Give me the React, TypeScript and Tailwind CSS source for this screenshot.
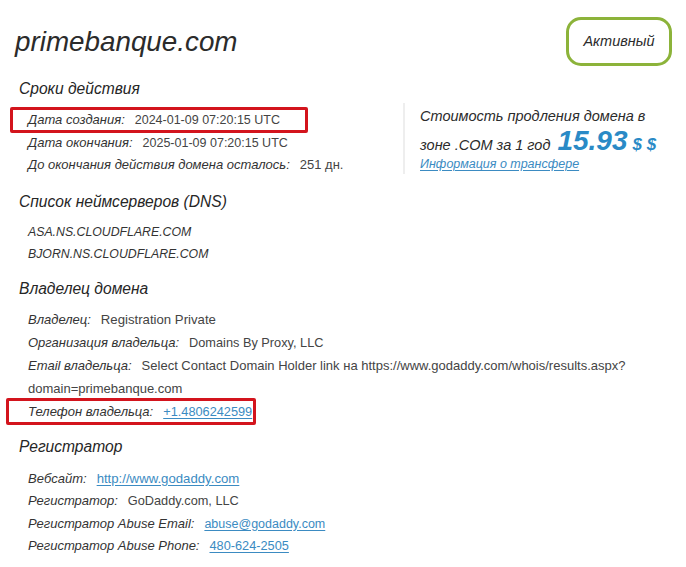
import React from "react";

const font = { fontFamily: '"Liberation Sans", Arial, sans-serif' };

function Row({ label, children, vs = "text-[12.75px]", h = "h-[22.5px] leading-[22.5px]" }: { label: string; children: React.ReactNode; vs?: string; h?: string }) {
  return (
    <div className={`flex items-baseline ${h} pl-[28px]`}>
      <span className="italic text-[13px] text-[#333] mr-[10px]">{label}</span>
      <span className={`${vs} text-[#444]`}>{children}</span>
    </div>
  );
}

function Heading({ children, mb = "mb-[8px]" }: { children: React.ReactNode; mb?: string }) {
  return (
    <div className={`pl-[19px] h-[25px] leading-[25px] text-[15.6px] italic text-[#262626] ${mb}`}>
      {children}
    </div>
  );
}

function A({ children }: { children: React.ReactNode }) {
  return <a className="text-[#3b8bc2] underline underline-offset-2" href="#">{children}</a>;
}

const H23 = "h-[23px] leading-[23px]";

export default function App() {
  return (
    <div className="w-[686px] h-[567px] bg-white overflow-hidden" style={font}>
      <div className="flex items-start justify-between pt-[17px] pl-[15px] pr-[14px]">
        <h1 className="h-[49px] leading-[49px] text-[27.8px] italic text-[#2b2b2b]">primebanque.com</h1>
        <div className="h-[49px] w-[106px] rounded-[15px] border-[3px] border-[#8cb33a] flex items-center justify-center italic text-[14.5px] text-[#2b2b2b]">
          Активный
        </div>
      </div>

      <div className="flex mt-[10px]">
        <div className="w-[403px]">
          <Heading>Сроки действия</Heading>
          <div className="relative">
            <div className="absolute left-[10px] top-[-2px] w-[298px] h-[26px] border-[3px] border-[#d3141d] rounded-[2px]" />
            <Row label="Дата создания:" vs="text-[12.5px]">2024-01-09 07:20:15 UTC</Row>
          </div>
          <Row label="Дата окончания:" vs="text-[12.5px]">2025-01-09 07:20:15 UTC</Row>
          <Row label="До окончания действия домена осталось:" vs="text-[13px]">251 дн.</Row>
        </div>
        <div className="mt-[27px] h-[71px] border-l-2 border-[#eeeeee] pl-[15px] pt-[1px]">
          <div className="italic text-[14.5px] leading-[24px] text-[#2b2b2b]">Стоимость продления домена в</div>
          <div className="flex items-baseline italic text-[14.5px] text-[#2b2b2b] h-[25px] leading-[25px]">
            <span>зоне .COM за 1 год</span>
            <span className="ml-[7px] text-[28px] font-bold text-[#2a8ac6]">15.93</span>
            <span className="ml-[5px] text-[17px] font-bold text-[#2a8ac6]">$ $</span>
          </div>
          <div className="italic text-[12.5px] leading-[22px]">
            <A>Информация о трансфере</A>
          </div>
        </div>
      </div>

      <div className="mt-[12px]">
        <Heading mb="mb-[7px]">Список неймсерверов (DNS)</Heading>
        <div className="pl-[28px] text-[12.3px] leading-[22.5px] italic text-[#333]">
          <div>ASA.NS.CLOUDFLARE.COM</div>
          <div>BJORN.NS.CLOUDFLARE.COM</div>
        </div>
      </div>

      <div className="mt-[10px]">
        <Heading mb="mb-[7px]">Владелец домена</Heading>
        <Row label="Владелец:" vs="text-[13.2px]" h={H23}>Registration Private</Row>
        <Row label="Организация владельца:" h={H23}>Domains By Proxy, LLC</Row>
        <Row label="Email владельца:" vs="text-[13px]" h={H23}>
          Select Contact Domain Holder link на https://www.godaddy.com/whois/results.aspx?
        </Row>
        <div className="pl-[28px] h-[23px] leading-[23px] text-[13px] text-[#444]">domain=primebanque.com</div>
        <div className="relative">
          <div className="absolute left-[6px] top-[-2px] w-[250px] h-[27px] border-[3px] border-[#d3141d] rounded-[2px]" />
          <Row label="Телефон владельца:" h={H23}><A>+1.4806242599</A></Row>
        </div>
      </div>

      <div className="mt-[11px]">
        <Heading>Регистратор</Heading>
        <div className="pt-[1px]">
          <Row label="Вебсайт:" vs="text-[13.2px]"><A>http://www.godaddy.com</A></Row>
          <Row label="Регистратор:">GoDaddy.com, LLC</Row>
          <Row label="Регистратор Abuse Email:" vs="text-[12.5px]"><A>abuse@godaddy.com</A></Row>
          <Row label="Регистратор Abuse Phone:"><A>480-624-2505</A></Row>
        </div>
      </div>
    </div>
  );
}
